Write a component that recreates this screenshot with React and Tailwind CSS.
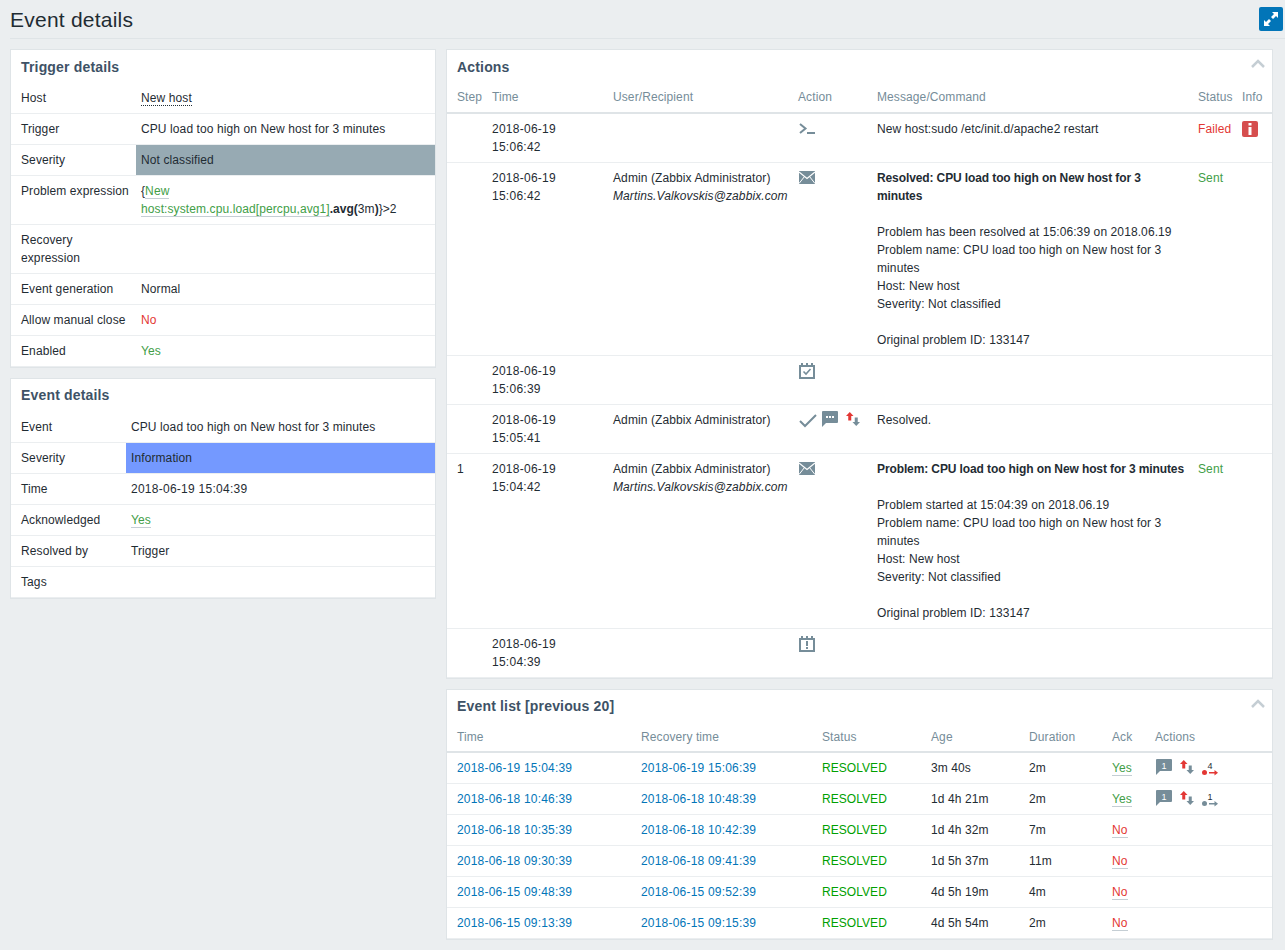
import React from "react";

const slate = "#768d99";

function Card({ title, children, collapsible, titleClass }) {
  return (
    <div className="relative mb-[10px] border border-[#dfe4e7] bg-white">
      <div className={"px-[10px] text-sm font-bold leading-[18px] tracking-[0.17px] text-[#3e5266] " + titleClass}>{title}</div>
      {collapsible ? (
        <svg className="absolute right-[7px] top-[9px]" width="14" height="9" viewBox="0 0 14 9">
          <polyline points="1,8 7,2 13,8" fill="none" stroke="#c5ced4" strokeWidth="2.5" />
        </svg>
      ) : null}
      {children}
    </div>
  );
}

function InfoRow({ label, children, cellClass }) {
  const b = "border-b border-[#ebeef0]";
  return (
    <tr>
      <td className={"py-1.5 pl-[10px] pr-[5px] align-top " + b}>{label}</td>
      <td className={"px-[5px] py-1.5 align-top " + b + " " + (cellClass || "")}>{children}</td>
    </tr>
  );
}

function InfoTable({ width, children }) {
  return (
    <table className="w-full table-fixed border-separate border-spacing-0">
      <colgroup>
        <col style={{ width }} />
        <col />
      </colgroup>
      <tbody>{children}</tbody>
    </table>
  );
}

function Th({ children, first, tight }) {
  return (
    <th className={"border-b-2 border-[#dfe4e7] pr-[5px] pt-1.5 text-left font-normal text-[#768d99] " + (first ? "pl-[10px] " : "pl-[5px] ") + (tight ? "pb-[5px]" : "pb-1.5")}>
      {children}
    </th>
  );
}

function Td({ children, first }) {
  return (
    <td className={"border-b border-[#ebeef0] py-1.5 pr-[5px] align-top " + (first ? "pl-[10px]" : "pl-[5px]")}>
      {children}
    </td>
  );
}

function Stamp({ children }) {
  return <span className="tracking-[0.26px]">{children}</span>;
}

function TerminalIcon() {
  return (
    <svg width="18" height="14" viewBox="0 0 18 14" className="ml-[1px] mt-[2px] block">
      <polyline points="1,2 6.5,6.5 1,11" fill="none" stroke={slate} strokeWidth="2" />
      <rect x="8" y="10" width="8" height="2" fill={slate} />
    </svg>
  );
}

function MailIcon() {
  return (
    <svg width="16" height="13" viewBox="0 0 16 13" className="ml-[1px] mt-[2px] block">
      <rect x="0" y="0" width="16" height="13" fill={slate} />
      <polyline points="0,1 8,7.5 16,1" fill="none" stroke="#fff" strokeWidth="1.2" />
      <line x1="0" y1="12.5" x2="5.5" y2="5.5" stroke="#fff" strokeWidth="1" />
      <line x1="16" y1="12.5" x2="10.5" y2="5.5" stroke="#fff" strokeWidth="1" />
    </svg>
  );
}

function CalendarIcon({ bang }) {
  return (
    <svg width="16" height="16" viewBox="0 0 16 16" className="ml-[1px] mt-[1px] block">
      <rect x="1" y="3" width="14" height="12" fill="none" stroke={slate} strokeWidth="2" />
      <rect x="2" y="0" width="2" height="3" fill={slate} />
      <rect x="7" y="0" width="2" height="3" fill={slate} />
      <rect x="12" y="0" width="2" height="3" fill={slate} />
      {bang ? (
        <g fill={slate}>
          <rect x="7" y="5" width="2" height="5" />
          <rect x="7" y="11" width="2" height="2" />
        </g>
      ) : (
        <polyline points="4.5,8.5 7,11 11.5,6" fill="none" stroke={slate} strokeWidth="1.6" />
      )}
    </svg>
  );
}

function CheckIcon() {
  return (
    <svg width="18" height="14" viewBox="0 0 18 14" className="mt-[3px] block">
      <polyline points="1,7 6,12 17,1" fill="none" stroke={slate} strokeWidth="2" />
    </svg>
  );
}

function ChatIcon({ n }) {
  return (
    <span className="relative block h-4 w-4">
      <svg width="16" height="16" viewBox="0 0 16 16" className="block">
        <path d="M1 0h14a1 1 0 0 1 1 1v10a1 1 0 0 1-1 1H4l-4 4V1a1 1 0 0 1 1-1z" fill={slate} />
        {n ? null : (
          <g fill="#fff">
            <rect x="4" y="5" width="2" height="2" />
            <rect x="7" y="5" width="2" height="2" />
            <rect x="10" y="5" width="2" height="2" />
          </g>
        )}
      </svg>
      {n ? <span className="absolute left-0 top-[1px] w-4 text-center text-[9px] leading-[12px] tracking-normal text-white">{n}</span> : null}
    </span>
  );
}

function SwapIcon() {
  return (
    <svg width="14" height="14" viewBox="0 0 14 14" className="block">
      <path d="M3.750 0L7.500 4H5.250V8.500H2.250V4H0z" fill="#e33734" />
      <path d="M10.250 14L14 10H11.750V5.500H8.750V10H6.500z" fill={slate} />
    </svg>
  );
}

function EscalationIcon({ n, color }) {
  return (
    <span className="relative block h-[16px] w-[16px]">
      <svg width="16" height="16" viewBox="0 0 16 16" className="block">
        <circle cx="2.500" cy="12.500" r="2.500" fill={color} />
        <rect x="7" y="12" width="6" height="1.500" fill={color} />
        <path d="M12.500 10l3.500 2.750-3.500 2.750z" fill={color} />
      </svg>
      <span className="absolute left-[4px] top-0 w-[8px] text-center text-[9px] leading-[12px] tracking-normal text-[#1f2c33]">{n}</span>
    </span>
  );
}

function Yes() {
  return <span className="border-b border-[#c5ced4] text-[#429e47]">Yes</span>;
}

function No() {
  return <span className="border-b border-[#c5ced4] text-[#e33734]">No</span>;
}

const events = [
  ["2018-06-19 15:04:39", "2018-06-19 15:06:39", "3m 40s", "2m", true, ["4", "#e33734"]],
  ["2018-06-18 10:46:39", "2018-06-18 10:48:39", "1d 4h 21m", "2m", true, ["1", slate]],
  ["2018-06-18 10:35:39", "2018-06-18 10:42:39", "1d 4h 32m", "7m", false],
  ["2018-06-18 09:30:39", "2018-06-18 09:41:39", "1d 5h 37m", "11m", false],
  ["2018-06-15 09:48:39", "2018-06-15 09:52:39", "4d 5h 19m", "4m", false],
  ["2018-06-15 09:13:39", "2018-06-15 09:15:39", "4d 5h 54m", "2m", false],
];

export default function App() {
  return (
    <div className="min-h-screen bg-[#ebeef0] pl-[10px] font-['Liberation_Sans',Arial,sans-serif] text-xs leading-[18px] tracking-[0.1px] text-[#1f2c33]">
      <div className="flex h-[39px] items-start justify-between border-b border-[#dfe4e7] pr-[2px]">
        <h1 className="pt-[8px] text-[21px] leading-6 tracking-[0.23px] text-[#1f2c33]">Event details</h1>
        <button type="button" className="mt-[7px] flex h-6 w-6 items-center justify-center rounded-[2px] bg-[#0275b8]">
          <svg width="16" height="16" viewBox="0 0 16 16">
            <path d="M9 1h6v6l-2-2-3 3-2-2 3-3zM7 15H1V9l2 2 3-3 2 2-3 3z" fill="#fff" />
          </svg>
        </button>
      </div>

      <div className="grid grid-cols-[426px_827px] gap-[10px] pt-[10px]">
        <div>
          <Card title="Trigger details" titleClass="pb-[7px] pt-2">
            <InfoTable width="125px">
              <InfoRow label="Host">
                <span className="border-b border-dotted border-[#1f2c33]">New host</span>
              </InfoRow>
              <InfoRow label="Trigger">CPU load too high on New host for 3 minutes</InfoRow>
              <InfoRow label="Severity" cellClass="bg-[#97aab3]">Not classified</InfoRow>
              <InfoRow label="Problem expression">
                {"{"}
                <span className="border-b border-[#c5ced4] text-[#429e47]">New</span>
                <br />
                <span className="border-b border-[#c5ced4] text-[#429e47]">host:system.cpu.load[percpu,avg1]</span>
                <b className="tracking-normal">.avg(</b>3m<b className="tracking-normal">)</b>
                {"}>2"}
              </InfoRow>
              <InfoRow label="Recovery expression" />
              <InfoRow label="Event generation">Normal</InfoRow>
              <InfoRow label="Allow manual close"><span className="text-[#e33734]">No</span></InfoRow>
              <InfoRow label="Enabled"><span className="text-[#429e47]">Yes</span></InfoRow>
            </InfoTable>
          </Card>

          <Card title="Event details" titleClass="pb-2 pt-[7px]">
            <InfoTable width="115px">
              <InfoRow label="Event">CPU load too high on New host for 3 minutes</InfoRow>
              <InfoRow label="Severity" cellClass="bg-[#7499ff]">Information</InfoRow>
              <InfoRow label="Time"><Stamp>2018-06-19 15:04:39</Stamp></InfoRow>
              <InfoRow label="Acknowledged"><Yes /></InfoRow>
              <InfoRow label="Resolved by">Trigger</InfoRow>
              <InfoRow label="Tags" />
            </InfoTable>
          </Card>
        </div>

        <div>
          <Card title="Actions" collapsible titleClass="pb-[6px] pt-2">
            <table className="w-full table-fixed border-separate border-spacing-0">
              <colgroup>
                <col className="w-[40px]" />
                <col className="w-[121px]" />
                <col className="w-[185px]" />
                <col className="w-[79px]" />
                <col className="w-[321px]" />
                <col className="w-[44px]" />
                <col className="w-[35px]" />
              </colgroup>
              <thead>
                <tr>
                  <Th first>Step</Th>
                  <Th>Time</Th>
                  <Th>User/Recipient</Th>
                  <Th>Action</Th>
                  <Th>Message/Command</Th>
                  <Th>Status</Th>
                  <Th>Info</Th>
                </tr>
              </thead>
              <tbody>
                <tr>
                  <Td first />
                  <Td><Stamp>2018-06-19<br />15:06:42</Stamp></Td>
                  <Td />
                  <Td><TerminalIcon /></Td>
                  <Td>New host:sudo /etc/init.d/apache2 restart</Td>
                  <Td><span className="text-[#e33734]">Failed</span></Td>
                  <Td>
                    <span className="mt-[1px] flex h-4 w-4 items-center justify-center rounded-[2px] bg-[#d64e4e]">
                      <svg width="4" height="12" viewBox="0 0 4 12">
                        <rect x="0.500" y="0" width="3" height="2.500" fill="#fff" />
                        <rect x="0.500" y="4" width="3" height="8" fill="#fff" />
                      </svg>
                    </span>
                  </Td>
                </tr>
                <tr>
                  <Td first />
                  <Td><Stamp>2018-06-19<br />15:06:42</Stamp></Td>
                  <Td>Admin (Zabbix Administrator)<br /><i>Martins.Valkovskis@zabbix.com</i></Td>
                  <Td><MailIcon /></Td>
                  <Td>
                    <b className="tracking-[-0.11px]">Resolved: CPU load too high on New host for 3 minutes</b>
                    <br /><br />
                    Problem has been resolved at 15:06:39 on 2018.06.19
                    <br />
                    Problem name: CPU load too high on New host for 3 minutes
                    <br />
                    Host: New host
                    <br />
                    Severity: Not classified
                    <br /><br />
                    Original problem ID: 133147
                  </Td>
                  <Td><span className="text-[#429e47]">Sent</span></Td>
                  <Td />
                </tr>
                <tr>
                  <Td first />
                  <Td><Stamp>2018-06-19<br />15:06:39</Stamp></Td>
                  <Td />
                  <Td><CalendarIcon /></Td>
                  <Td />
                  <Td />
                  <Td />
                </tr>
                <tr>
                  <Td first />
                  <Td><Stamp>2018-06-19<br />15:05:41</Stamp></Td>
                  <Td>Admin (Zabbix Administrator)</Td>
                  <Td>
                    <div className="flex items-start gap-[5px] pl-[1px]">
                      <CheckIcon />
                      <ChatIcon />
                      <span className="ml-[3px] mt-[1px]"><SwapIcon /></span>
                    </div>
                  </Td>
                  <Td>Resolved.</Td>
                  <Td />
                  <Td />
                </tr>
                <tr>
                  <Td first>1</Td>
                  <Td><Stamp>2018-06-19<br />15:04:42</Stamp></Td>
                  <Td>Admin (Zabbix Administrator)<br /><i>Martins.Valkovskis@zabbix.com</i></Td>
                  <Td><MailIcon /></Td>
                  <Td>
                    <b className="tracking-[-0.11px]">Problem: CPU load too high on New host for 3 minutes</b>
                    <br /><br />
                    Problem started at 15:04:39 on 2018.06.19
                    <br />
                    Problem name: CPU load too high on New host for 3 minutes
                    <br />
                    Host: New host
                    <br />
                    Severity: Not classified
                    <br /><br />
                    Original problem ID: 133147
                  </Td>
                  <Td><span className="text-[#429e47]">Sent</span></Td>
                  <Td />
                </tr>
                <tr>
                  <Td first />
                  <Td><Stamp>2018-06-19<br />15:04:39</Stamp></Td>
                  <Td />
                  <Td><CalendarIcon bang /></Td>
                  <Td />
                  <Td />
                  <Td />
                </tr>
              </tbody>
            </table>
          </Card>

          <Card title="Event list [previous 20]" collapsible titleClass="pb-[7px] pt-[7px]">
            <table className="w-full table-fixed border-separate border-spacing-0">
              <colgroup>
                <col className="w-[189px]" />
                <col className="w-[181px]" />
                <col className="w-[109px]" />
                <col className="w-[98px]" />
                <col className="w-[83px]" />
                <col className="w-[43px]" />
                <col className="w-[122px]" />
              </colgroup>
              <thead>
                <tr>
                  <Th first tight>Time</Th>
                  <Th tight>Recovery time</Th>
                  <Th tight>Status</Th>
                  <Th tight>Age</Th>
                  <Th tight>Duration</Th>
                  <Th tight>Ack</Th>
                  <Th tight>Actions</Th>
                </tr>
              </thead>
              <tbody>
                {events.map((ev) => (
                  <tr key={ev[0]}>
                    <Td first><span className="tracking-[0.2px] text-[#0275b8]">{ev[0]}</span></Td>
                    <Td><span className="tracking-[0.2px] text-[#0275b8]">{ev[1]}</span></Td>
                    <Td><span className="tracking-[0.05px] text-[#00a000]">RESOLVED</span></Td>
                    <Td>{ev[2]}</Td>
                    <Td>{ev[3]}</Td>
                    <Td>{ev[4] ? <Yes /> : <No />}</Td>
                    <Td>
                      {ev[5] ? (
                        <div className="flex items-start gap-2 pl-[1px]">
                          <ChatIcon n="1" />
                          <span className="mt-[1px]"><SwapIcon /></span>
                          <span className="mt-[1px]"><EscalationIcon n={ev[5][0]} color={ev[5][1]} /></span>
                        </div>
                      ) : null}
                    </Td>
                  </tr>
                ))}
              </tbody>
            </table>
          </Card>
        </div>
      </div>
    </div>
  );
}
